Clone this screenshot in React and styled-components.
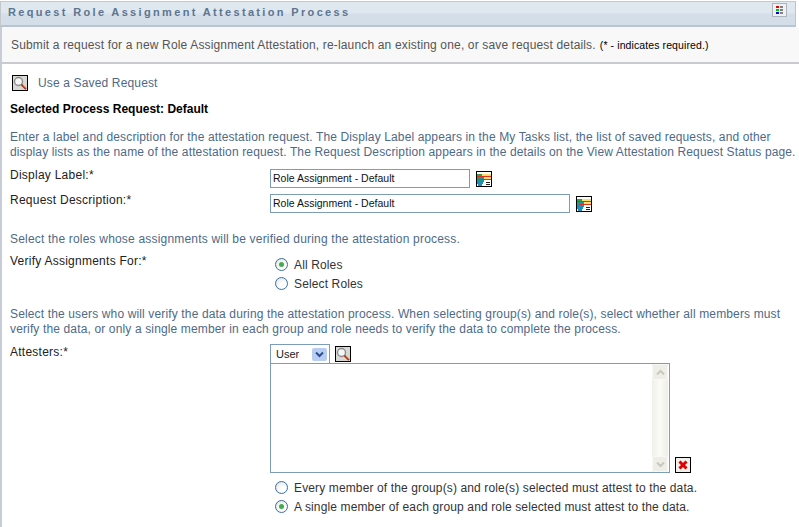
import React from 'react';
import styled, { createGlobalStyle } from 'styled-components';

const Global = createGlobalStyle`
  html, body {
    margin: 0;
    padding: 0;
    background: #fff;
    overflow: hidden;
  }
  body {
    font-family: "Liberation Sans", Arial, sans-serif;
    font-size: 12px;
  }
`;

const Page = styled.div`
  width: 799px;
  height: 527px;
  overflow: hidden;
  display: flex;
  flex-direction: column;
`;

const TitleBar = styled.div`
  height: 22px;
  margin: 1px 3px 0 0;
  display: flex;
  align-items: flex-start;
  justify-content: space-between;
  padding: 1px 8px 0 7px;
  border-top: 1px solid #c4c8cc;
  border-left: 1px solid #c4c8cc;
  border-right: 1px solid #b8c4d0;
  border-bottom: 2px solid #b8c4d0;
  background: linear-gradient(#dfe7ef 0, #dfe7ef 45%, #d3dee8 55%, #d3dee8 100%);
`;

const Title = styled.h1`
  margin: 3px 0 0;
  font-size: 11px;
  line-height: 13px;
  font-weight: bold;
  letter-spacing: 2.34px;
  color: #5d7590;
`;

const GridButton = styled.div`
  width: 15px;
  height: 14px;
  box-sizing: border-box;
  border: 1px solid #aeb4ba;
  background: #eef2f6;
  display: grid;
  grid-template-columns: 3px 3px;
  grid-auto-rows: 2px;
  gap: 1px 1px;
  padding: 2px 3px;
`;

const Dot = styled.span`
  background: ${(p) => p.$color};
`;

const Intro = styled.div`
  height: 35px;
  display: flex;
  align-items: center;
  padding-left: 9px;
  border-left: 2px solid #c8ccd8;
  border-bottom: 2px solid #c8ccd0;
  background: #f8f8f8;
  color: #555;
  font-size: 12px;
  letter-spacing: 0.16px;
  white-space: nowrap;
`;

const Small = styled.span`
  font-size: 10.5px;
  letter-spacing: 0.1px;
  color: #000;
  margin-left: 4px;
`;

const Body = styled.div`
  flex: 1;
  padding: 10px 0 0 8px;
  border-left: 2px solid #c8ccd8;
  display: flex;
  flex-direction: column;
`;

const SavedRow = styled.div`
  display: flex;
  align-items: center;
  gap: 10px;
  height: 18px;
  padding-left: 2px;
`;

const Link = styled.a`
  color: #4e6a88;
  font-size: 12px;
  letter-spacing: 0.15px;
`;

const Selected = styled.div`
  margin-top: 10px;
  font-size: 12px;
  font-weight: bold;
  color: #000;
  line-height: 14px;
`;

const Help = styled.p`
  margin: ${(p) => p.$top}px 0 0;
  color: #4e6a88;
  font-size: 12px;
  line-height: 15px;
  letter-spacing: ${(p) => p.$spacing}px;
  white-space: nowrap;
`;

const Row = styled.div`
  display: grid;
  grid-template-columns: 260px 1fr;
  margin-top: ${(p) => p.$top}px;
`;

const Label = styled.div`
  color: #222;
  font-size: 12px;
  line-height: 14px;
  letter-spacing: 0.25px;
`;

const Field = styled.div`
  display: flex;
  align-items: center;
  gap: 6px;
  padding-top: 1px;
`;

const Input = styled.div`
  width: ${(p) => p.$width}px;
  height: 19px;
  box-sizing: border-box;
  border: 1px solid #7c9cb8;
  font-size: 10.5px;
  line-height: 17px;
  padding-left: 2px;
  color: #111;
  background: #fff;
`;

const RadioList = styled.div`
  display: flex;
  flex-direction: column;
  gap: 4px;
  padding: ${(p) => p.$top}px 0 0 5px;
`;

const RadioRow = styled.div`
  display: flex;
  align-items: center;
  gap: 6px;
  height: 15px;
  color: #333;
  font-size: 12px;
  letter-spacing: 0.13px;
  white-space: nowrap;
`;

const RadioMark = styled.span`
  width: 13px;
  height: 13px;
  box-sizing: border-box;
  border-radius: 50%;
  border: 1px solid #3a6ea5;
  background: radial-gradient(circle at 65% 70%, #fff 30%, #dcdcd4 100%);
  display: flex;
  align-items: center;
  justify-content: center;
  flex: none;
  &::after {
    content: '';
    width: 5px;
    height: 5px;
    border-radius: 50%;
    background: ${(p) => (p.$on ? '#3fae4a' : 'transparent')};
  }
`;

const Attesters = styled.div`
  margin-top: -1px;
`;

const SelectRow = styled.div`
  display: flex;
  align-items: center;
  gap: 5px;
  height: 19px;
`;

const Select = styled.div`
  width: 60px;
  height: 19px;
  box-sizing: border-box;
  border: 1px solid #7c9cb8;
  border-bottom: 0;
  display: flex;
  align-items: center;
  justify-content: space-between;
  padding: 0 2px 0 5px;
  font-size: 11px;
  color: #222;
`;

const Arrow = styled.span`
  width: 15px;
  height: 13px;
  background: #b9cdf2;
  border-radius: 2px;
  display: flex;
  align-items: center;
  justify-content: center;
`;

const ListWrap = styled.div`
  display: flex;
  align-items: flex-end;
  gap: 5px;
`;

const ListBox = styled.div`
  width: 400px;
  height: 110px;
  box-sizing: border-box;
  border: 1px solid #7c9cb8;
  display: flex;
  justify-content: flex-end;
  background: #fff;
`;

const Track = styled.div`
  width: 16px;
  margin-right: 1px;
  display: flex;
  flex-direction: column;
  justify-content: space-between;
  background: linear-gradient(90deg, #f0f0e8, #fbfbf8 50%, #eeeee6);
`;

const ScrollBtn = styled.div`
  height: 16px;
  background: #eeeee6;
  border: 1px solid #f8f8f4;
  box-sizing: border-box;
  border-radius: 2px;
  display: flex;
  align-items: center;
  justify-content: center;
`;

const IconBox = styled.span`
  display: block;
  width: 16px;
  height: 16px;
  flex: none;
`;

function Magnifier() {
  return (
    <IconBox>
      <svg width="16" height="16" viewBox="0 0 16 16">
        <rect x="0.5" y="0.5" width="15" height="15" fill="#d8d8d4" stroke="#000" />
        <circle cx="6.5" cy="6.5" r="4" fill="#f4f6f8" stroke="#8c8c8c" strokeWidth="1.4" />
        <path d="M9.5 9.5 L14 14" stroke="#a82818" strokeWidth="2" />
        <path d="M10.5 9.8 L13.8 13" stroke="#e8c070" strokeWidth="0.8" />
      </svg>
    </IconBox>
  );
}

// globe with a key across it, drawn pixel by pixel like the old gif
function Localize() {
  return (
    <IconBox>
      <svg width="16" height="16" viewBox="0 0 16 16" shapeRendering="crispEdges">
        <rect x="0" y="0" width="16" height="16" fill="#000" />
        <rect x="1" y="1" width="14" height="14" fill="#fff" />
        <path d="M1 3 H7 V6 H8 V11 H7 V13 H6 V15 H2 V13 H1 Z" fill="#1f8fb8" />
        <path d="M2 3 H6 V5 H4 V8 H5 V10 H3 V8 H2 Z" fill="#2fa04a" />
        <rect x="6" y="3" width="9" height="2" fill="#f6e06a" />
        <rect x="1" y="5" width="14" height="1" fill="#e03020" />
        <rect x="8" y="6" width="7" height="2" fill="#f6e06a" />
        <rect x="3" y="8" width="12" height="1" fill="#e03020" />
        <rect x="10" y="11" width="4" height="1" fill="#222" />
        <rect x="10" y="13" width="4" height="1" fill="#222" />
      </svg>
    </IconBox>
  );
}

function Dots() {
  const colors = ['#e00000', '#808080', '#00c000', '#808080', '#0000e0', '#808080'];
  return (
    <GridButton>
      {colors.map((c, i) => (
        <Dot key={i} $color={c} />
      ))}
    </GridButton>
  );
}

function Chevron({ up, color }) {
  return (
    <svg width="9" height="7" viewBox="0 0 9 7">
      <path
        d={up ? 'M1 5.5 L4.5 2 L8 5.5' : 'M1 1.5 L4.5 5 L8 1.5'}
        fill="none"
        stroke={color}
        strokeWidth="2"
      />
    </svg>
  );
}

function RemoveIcon() {
  return (
    <IconBox>
      <svg width="16" height="16" viewBox="0 0 16 16">
        <rect x="0.5" y="0.5" width="15" height="15" fill="#f0f0ec" stroke="#000" />
        <path d="M4.5 4.5 L11.5 11.5 M11.5 4.5 L4.5 11.5" stroke="#e00000" strokeWidth="3" />
      </svg>
    </IconBox>
  );
}

function Radio({ on, children }) {
  return (
    <RadioRow>
      <RadioMark $on={on} />
      {children}
    </RadioRow>
  );
}

export default function App() {
  return (
    <Page>
      <Global />
      <TitleBar>
        <Title>Request Role Assignment Attestation Process</Title>
        <Dots />
      </TitleBar>
      <Intro>
        Submit a request for a new Role Assignment Attestation, re-launch an existing one, or save request details.
        <Small>(* - indicates required.)</Small>
      </Intro>
      <Body>
        <SavedRow>
          <Magnifier />
          <Link>Use a Saved Request</Link>
        </SavedRow>
        <Selected>Selected Process Request: Default</Selected>
        <Help $top={14} $spacing={0.135}>
          Enter a label and description for the attestation request. The Display Label appears in the My Tasks list, the list of saved requests, and other
          <br />
          display lists as the name of the attestation request. The Request Description appears in the details on the View Attestation Request Status page.
        </Help>
        <Row $top={8}>
          <Label>Display Label:*</Label>
          <Field>
            <Input $width={200}>Role Assignment - Default</Input>
            <Localize />
          </Field>
        </Row>
        <Row $top={5}>
          <Label>Request Description:*</Label>
          <Field>
            <Input $width={300}>Role Assignment - Default</Input>
            <Localize />
          </Field>
        </Row>
        <Help $top={19} $spacing={0.19}>Select the roles whose assignments will be verified during the attestation process.</Help>
        <Row $top={7}>
          <Label>Verify Assignments For:*</Label>
          <RadioList $top={3}>
            <Radio on>All Roles</Radio>
            <Radio>Select Roles</Radio>
          </RadioList>
        </Row>
        <Help $top={16} $spacing={0.14}>
          Select the users who will verify the data during the attestation process. When selecting group(s) and role(s), select whether all members must
          <br />
          verify the data, or only a single member in each group and role needs to verify the data to complete the process.
        </Help>
        <Row $top={8}>
          <Label>Attesters:*</Label>
          <Attesters>
            <SelectRow>
              <Select>
                User
                <Arrow>
                  <Chevron color="#2a4f8f" />
                </Arrow>
              </Select>
              <Magnifier />
            </SelectRow>
            <ListWrap>
              <ListBox>
                <Track>
                  <ScrollBtn>
                    <Chevron up color="#c8c8c0" />
                  </ScrollBtn>
                  <ScrollBtn>
                    <Chevron color="#c8c8c0" />
                  </ScrollBtn>
                </Track>
              </ListBox>
              <RemoveIcon />
            </ListWrap>
            <RadioList $top={7}>
              <Radio>Every member of the group(s) and role(s) selected must attest to the data.</Radio>
              <Radio on>A single member of each group and role selected must attest to the data.</Radio>
            </RadioList>
          </Attesters>
        </Row>
      </Body>
    </Page>
  );
}
